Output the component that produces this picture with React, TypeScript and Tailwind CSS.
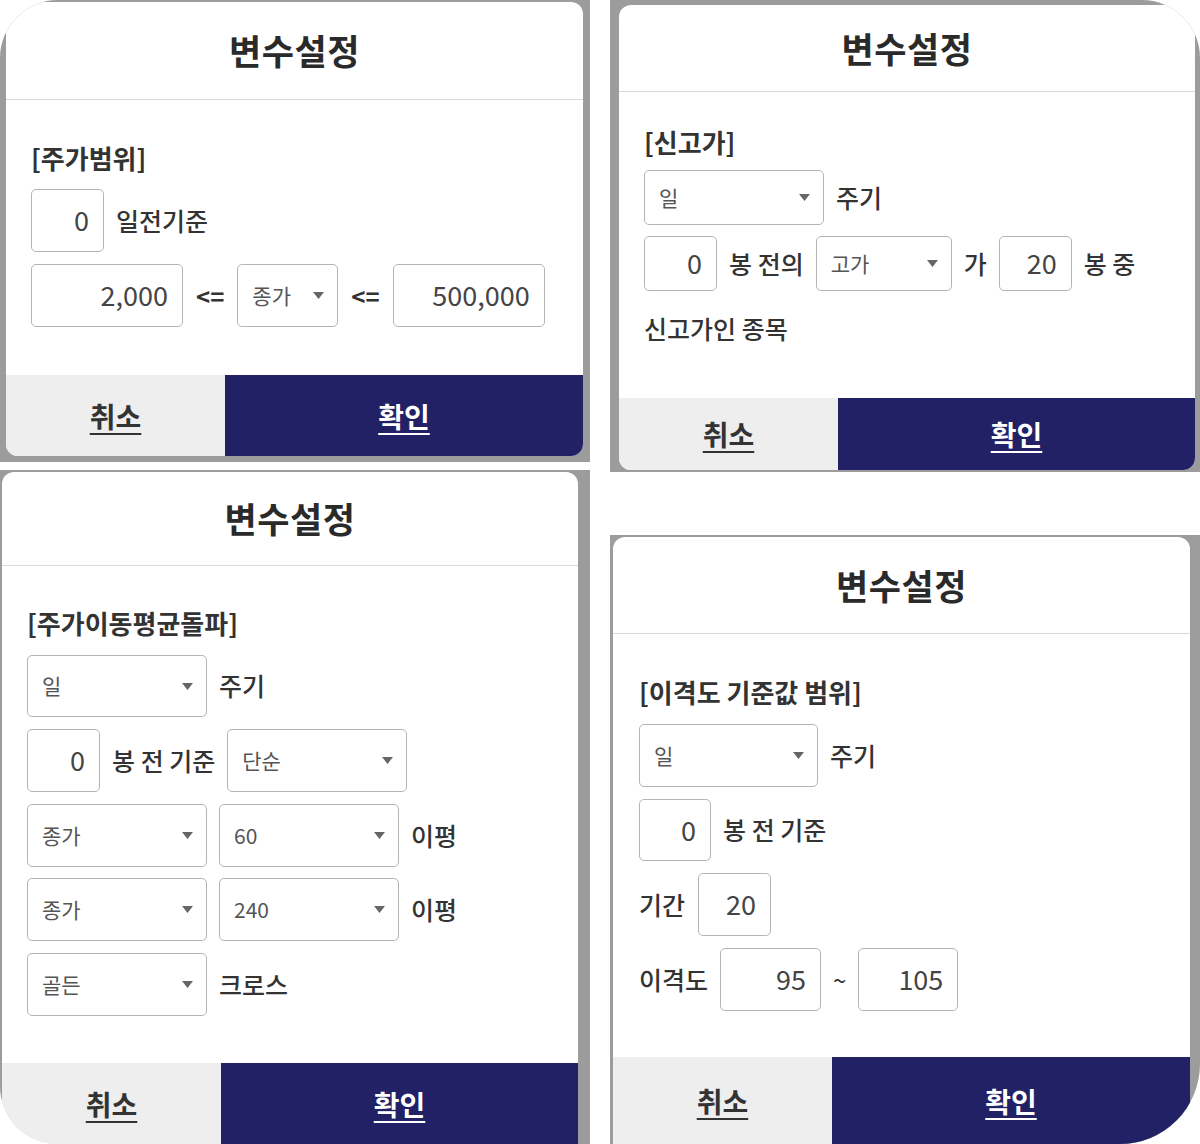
import React from "react";

const Arrow = () => (
  <svg width="11" height="7" viewBox="0 0 11 7" className="shrink-0">
    <path d="M0 0 L11 0 L5.5 7 Z" fill="#666" />
  </svg>
);

function Box({ w, v }: { w: string; v: string }) {
  return (
    <div
      className={`${w} h-full flex items-center justify-end pr-[14px] border border-[#b5b5b5] rounded-[5px] text-[27px] text-[#444] bg-white`}
    >
      {v}
    </div>
  );
}

function Sel({ w, v }: { w: string; v: string }) {
  return (
    <div
      className={`${w} h-full flex items-center justify-between pl-[14px] pr-[13px] border border-[#b5b5b5] rounded-[5px] text-[21px] text-[#555] bg-white`}
    >
      <span>{v}</span>
      <Arrow />
    </div>
  );
}

function Label({ children }: { children: React.ReactNode }) {
  return <span className="text-[25px] font-medium text-[#333] whitespace-nowrap">{children}</span>;
}

function Footer({ h }: { h: string }) {
  return (
    <div className={`${h} flex shrink-0`}>
      <div className="w-[219px] bg-[#eeeeee] flex items-center justify-center">
        <span className="text-[28px] font-bold text-[#333] underline underline-offset-[5px] decoration-[2px]">취소</span>
      </div>
      <div className="flex-1 bg-[#232166] flex items-center justify-center">
        <span className="text-[28px] font-bold text-white underline underline-offset-[5px] decoration-[2px]">확인</span>
      </div>
    </div>
  );
}

function Header({ h }: { h: string }) {
  return (
    <div className={`${h} shrink-0 border-b border-[#d9d9d9] flex items-center justify-center`}>
      <span className="text-[35px] font-bold text-[#2a2a2a] tracking-[0.5px]">변수설정</span>
    </div>
  );
}

function Heading({ children }: { children: React.ReactNode }) {
  return <div className="h-[32px] flex items-center text-[26px] font-bold text-[#333]">{children}</div>;
}

export default function App() {
  return (
    <div className="w-[1200px] h-[1144px] bg-white rounded-[58px] rounded-br-[80px] overflow-hidden flex gap-[20px] font-['Noto_Sans_CJK_KR','Noto_Sans',sans-serif]">
      {/* left column */}
      <div className="w-[590px] flex flex-col gap-[8px]">
        {/* panel 1 */}
        <div className="h-[462px] bg-[#9c9c9c] pt-[2px] pl-[6px] pr-[7px] pb-[6px]">
          <div className="h-full bg-white rounded-[12px] overflow-hidden flex flex-col">
            <Header h="h-[98px]" />
            <div className="flex-1 pl-[25px] pt-[41px]">
              <Heading>[주가범위]</Heading>
              <div className="mt-[16px] h-[63px] flex items-center gap-3">
                <Box w="w-[73px]" v="0" />
                <Label>일전기준</Label>
              </div>
              <div className="mt-[12px] h-[63px] flex items-center gap-[13px]">
                <Box w="w-[152px]" v="2,000" />
                <span className="text-[24px] font-bold text-[#333]">&lt;=</span>
                <Sel w="w-[101px]" v="종가" />
                <span className="text-[24px] font-bold text-[#333]">&lt;=</span>
                <Box w="w-[152px]" v="500,000" />
              </div>
            </div>
            <Footer h="h-[81px]" />
          </div>
        </div>
        {/* panel 3 */}
        <div className="flex-1 bg-[#9c9c9c] pt-[2px] pl-[2px] pr-[12px]">
          <div className="h-full bg-white rounded-t-[12px] overflow-hidden flex flex-col">
            <Header h="h-[94px]" />
            <div className="flex-1 pl-[25px] pt-[40px]">
              <Heading>[주가이동평균돌파]</Heading>
              <div className="mt-[17px] h-[62px] flex items-center gap-3">
                <Sel w="w-[180px]" v="일" />
                <Label>주기</Label>
              </div>
              <div className="mt-[12px] h-[63px] flex items-center gap-3">
                <Box w="w-[73px]" v="0" />
                <Label>봉 전 기준</Label>
                <Sel w="w-[180px]" v="단순" />
              </div>
              <div className="mt-[12px] h-[63px] flex items-center gap-3">
                <Sel w="w-[180px]" v="종가" />
                <Sel w="w-[180px]" v="60" />
                <Label>이평</Label>
              </div>
              <div className="mt-[11px] h-[63px] flex items-center gap-3">
                <Sel w="w-[180px]" v="종가" />
                <Sel w="w-[180px]" v="240" />
                <Label>이평</Label>
              </div>
              <div className="mt-[12px] h-[63px] flex items-center gap-3">
                <Sel w="w-[180px]" v="골든" />
                <Label>크로스</Label>
              </div>
            </div>
            <Footer h="h-[81px]" />
          </div>
        </div>
      </div>

      {/* right column */}
      <div className="w-[590px] flex flex-col gap-[63px]">
        {/* panel 2 */}
        <div className="h-[472px] bg-[#9c9c9c] pt-[5px] pl-[9px] pr-[5px] pb-[2px] flex flex-col">
          <div className="flex-1 bg-white rounded-[12px] overflow-hidden flex flex-col">
            <Header h="h-[87px]" />
            <div className="flex-1 pl-[25px] pt-[33px]">
              <Heading>[신고가]</Heading>
              <div className="mt-[13px] h-[55px] flex items-center gap-3">
                <Sel w="w-[180px]" v="일" />
                <Label>주기</Label>
              </div>
              <div className="mt-[11px] h-[55px] flex items-center gap-[12px]">
                <Box w="w-[73px]" v="0" />
                <Label>봉 전의</Label>
                <Sel w="w-[136px]" v="고가" />
                <Label>가</Label>
                <Box w="w-[73px]" v="20" />
                <Label>봉 중</Label>
              </div>
              <div className="mt-[22px] h-[32px] flex items-center">
                <Label>신고가인 종목</Label>
              </div>
            </div>
            <Footer h="h-[72px]" />
          </div>
        </div>
        {/* panel 4 */}
        <div className="flex-1 bg-[#9c9c9c] pt-[2px] pl-[3px] pr-[10px]">
          <div className="h-full bg-white rounded-t-[12px] overflow-hidden flex flex-col">
            <Header h="h-[97px]" />
            <div className="flex-1 pl-[26px] pt-[41px]">
              <Heading>[이격도 기준값 범위]</Heading>
              <div className="mt-[17px] h-[63px] flex items-center gap-3">
                <Sel w="w-[179px]" v="일" />
                <Label>주기</Label>
              </div>
              <div className="mt-[12px] h-[62px] flex items-center gap-3">
                <Box w="w-[72px]" v="0" />
                <Label>봉 전 기준</Label>
              </div>
              <div className="mt-[12px] h-[63px] flex items-center gap-[13px]">
                <Label>기간</Label>
                <Box w="w-[73px]" v="20" />
              </div>
              <div className="mt-[12px] h-[63px] flex items-center gap-[12px]">
                <Label>이격도</Label>
                <Box w="w-[101px]" v="95" />
                <span className="text-[24px] text-[#333]">~</span>
                <Box w="w-[100px]" v="105" />
              </div>
            </div>
            <Footer h="h-[87px]" />
          </div>
        </div>
      </div>
    </div>
  );
}
